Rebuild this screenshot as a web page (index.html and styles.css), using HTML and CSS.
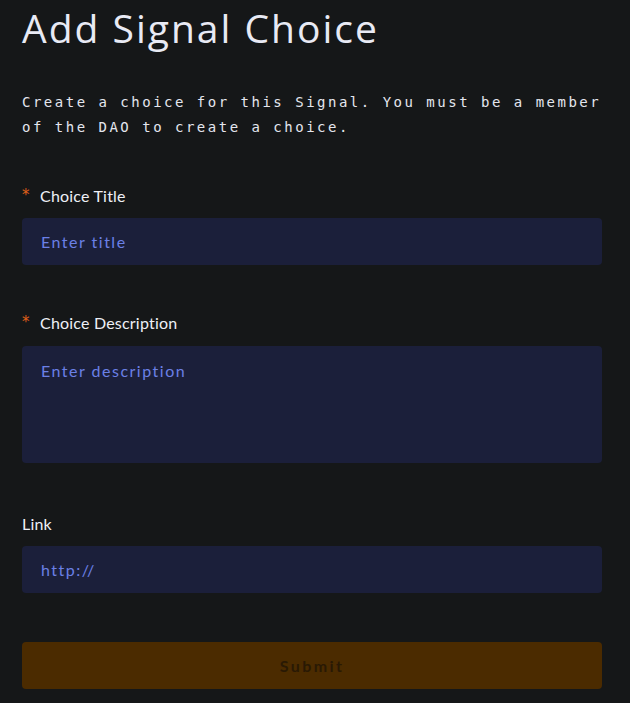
FILE: index.html
```html
<!DOCTYPE html>
<html>
<head>
<meta charset="utf-8">
<link rel="stylesheet" href="styles.css">
</head>
<body>
<div class="page">
  <h1 class="title">Add Signal Choice</h1>
  <p class="intro">Create a choice for this Signal. You must be a member of the DAO to create a choice.</p>
  <form class="form">
    <div class="field">
      <label class="label"><span class="req">*</span>Choice Title</label>
      <input class="input" type="text" placeholder="Enter title">
    </div>
    <div class="field field-area">
      <label class="label"><span class="req">*</span>Choice Description</label>
      <textarea class="input textarea" placeholder="Enter description"></textarea>
    </div>
    <div class="field">
      <label class="label">Link</label>
      <input class="input" type="text" placeholder="http://">
    </div>
    <button class="submit" type="button">Submit</button>
  </form>
</div>
</body>
</html>
```

FILE: styles.css
```css
html, body {
  margin: 0;
  padding: 0;
  background: #151718;
}
.page {
  width: 580px;
  padding: 0 0 0 22px;
  font-family: "Lato", sans-serif;
}
.title {
  margin: 0;
  padding-top: 6px;
  font-family: "Open Sans", sans-serif;
  font-weight: 400;
  font-size: 39px;
  line-height: 44px;
  color: #e8eaf4;
  letter-spacing: 2px;
}
.intro {
  width: 600px;
  margin: 40px 0 0 0;
  font-family: "DejaVu Sans Mono", monospace;
  font-size: 14px;
  line-height: 25px;
  letter-spacing: 2.5px;
  color: #e4e6ee;
}
.form {
  margin-top: 46px;
  display: flex;
  flex-direction: column;
}
.field {
  display: flex;
  flex-direction: column;
  margin-bottom: 48px;
}
.field-area {
  margin-bottom: 51px;
}
.label {
  font-family: "Lato", sans-serif;
  font-size: 16px;
  line-height: 20px;
  letter-spacing: 0.2px;
  color: #eef0f6;
  margin-bottom: 12px;
}
.field-area .label {
  margin-bottom: 13px;
}
.req {
  color: #e0601a;
  display: inline-block;
  width: 18px;
  font-family: "DejaVu Sans", sans-serif;
  font-size: 15px;
  line-height: 10px;
  position: relative;
  top: -2px;
}
.input {
  box-sizing: border-box;
  width: 580px;
  height: 47px;
  border: none;
  border-radius: 4px;
  background: #1b1f3a;
  padding: 0 19px;
  font-family: "Lato", sans-serif;
  font-size: 16px;
  letter-spacing: 1.5px;
  color: #dfe3ff;
  outline: none;
}
.input::placeholder {
  color: #6b80e6;
  opacity: 1;
}
.textarea {
  height: 117px;
  padding: 15px 19px;
  resize: none;
  line-height: 20px;
  display: block;
}
.submit {
  margin-top: 1px;
  width: 580px;
  height: 47px;
  border: none;
  border-radius: 4px;
  background: #4b2b00;
  font-family: "Lato", sans-serif;
  font-weight: 700;
  font-size: 16px;
  letter-spacing: 2.4px;
  color: #291904;
}
```
